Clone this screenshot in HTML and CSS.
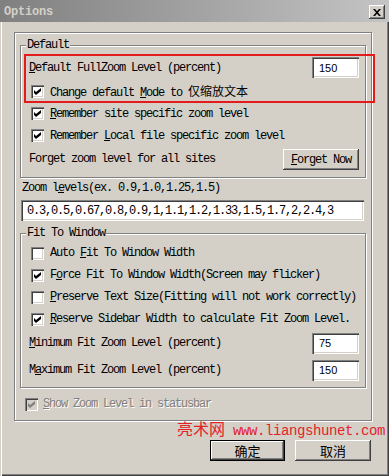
FILE: index.html
```html
<!DOCTYPE html>
<html lang="en">

<head>
    <meta charset="UTF-8">
    <meta name="viewport" content="width=device-width, initial-scale=1.0">
    <title>Options</title>
    <link rel="stylesheet" href="styles.css">
</head>

<body>
    <div class="window">
        <div class="titlebar">
            <span class="title">Options</span>
            <span class="close">
                <svg width="8" height="7" viewBox="0 0 8 7">
                    <path d="M0 0h2l2 2.3 2-2.3h2l-3 3.5 3 3.5h-2l-2-2.3-2 2.3h-2l3-3.5z" fill="#000" />
                </svg>
            </span>
        </div>
        <div class="client">
            <div class="panel">
                <fieldset class="group group-default">
                    <legend>Default</legend>
                    <div class="row row-level">
                        <span><u>D</u>efault FullZoom Level (percent)</span>
                        <span class="edit num">150</span>
                    </div>
                    <div class="row row-mode">
                        <span class="check on"><svg width="7" height="7" viewBox="0 0 7 7"><path d="M0 2l2 2 5-4v3l-5 4-2-2z" /></svg></span>
                        <span>Change default <u>M</u>ode to <span class="cjk">仅缩放文本</span></span>
                    </div>
                    <div class="row row-site">
                        <span class="check on"><svg width="7" height="7" viewBox="0 0 7 7"><path d="M0 2l2 2 5-4v3l-5 4-2-2z" /></svg></span>
                        <span><u>R</u>emember site specific zoom level</span>
                    </div>
                    <div class="row row-local">
                        <span class="check on"><svg width="7" height="7" viewBox="0 0 7 7"><path d="M0 2l2 2 5-4v3l-5 4-2-2z" /></svg></span>
                        <span>Remember <u>L</u>ocal file specific zoom level</span>
                    </div>
                    <div class="row row-forget">
                        <span>Forget zoom level for all sites</span>
                        <span class="btn btn-forget"><span><u>F</u>orget Now</span></span>
                    </div>
                </fieldset>

                <div class="caption">Zoom l<u>e</u>vels(ex. 0.9,1.0,1.25,1.5)</div>
                <div class="edit wide">0.3,0.5,0.67,0.8,0.9,1,1.1,1.2,1.33,1.5,1.7,2,2.4,3</div>

                <fieldset class="group group-fit">
                    <legend>Fit To Window</legend>
                    <div class="row row-fit">
                        <span class="check"></span>
                        <span>Auto <u>F</u>it To Window Width</span>
                    </div>
                    <div class="row row-fit">
                        <span class="check on"><svg width="7" height="7" viewBox="0 0 7 7"><path d="M0 2l2 2 5-4v3l-5 4-2-2z" /></svg></span>
                        <span>F<u>o</u>rce Fit To Window Width(Screen may flicker)</span>
                    </div>
                    <div class="row row-fit">
                        <span class="check"></span>
                        <span><u>P</u>reserve Text Size(Fitting will not work correctly)</span>
                    </div>
                    <div class="row row-fit">
                        <span class="check on"><svg width="7" height="7" viewBox="0 0 7 7"><path d="M0 2l2 2 5-4v3l-5 4-2-2z" /></svg></span>
                        <span><u>R</u>eserve Sidebar Width to calculate Fit Zoom Level.</span>
                    </div>
                    <div class="row row-min">
                        <span><u>M</u>inimum Fit Zoom Level (percent)</span>
                        <span class="edit num">75</span>
                    </div>
                    <div class="row row-max">
                        <span>M<u>a</u>ximum Fit Zoom Level (percent)</span>
                        <span class="edit num">150</span>
                    </div>
                </fieldset>

                <div class="row row-status disabled">
                    <span class="check on"><svg width="7" height="7" viewBox="0 0 7 7"><path d="M0 2l2 2 5-4v3l-5 4-2-2z" /></svg></span>
                    <span><u>S</u>how Zoom Level in statusbar</span>
                </div>
            </div>

            <div class="buttons">
                <span class="btn btn-ok"><span class="cjk">确定</span></span>
                <span class="btn btn-cancel"><span class="cjk">取消</span></span>
            </div>
        </div>

        <div class="mark"><span class="mark-cjk">亮术网</span><span class="mark-url"> www.liangshunet.com</span></div>
        <div class="highlight"></div>
    </div>
</body>

</html>
```

FILE: styles.css
```css
body {
    margin: 0;
    padding: 0;
    background-color: #d4d0c8;
}

.window {
    width: 389px;
    height: 476px;
    position: relative;
    overflow: hidden;
    box-sizing: border-box;
    background-color: #d4d0c8;
    box-shadow: inset 1px 0 #d4d0c8, inset 2px 0 #fff, inset -1px -1px #404040, inset -2px -2px #808080;
    font-family: "Liberation Mono", "Noto Sans CJK SC", monospace;
    font-size: 12px;
    letter-spacing: -1.2px;
    color: #000;
}

.titlebar {
    height: 22px;
    box-sizing: border-box;
    padding: 2px 4px 0 4px;
    display: flex;
    align-items: center;
    justify-content: space-between;
    background: linear-gradient(to right, #808080, #c4c4c4);
}

.title {
    font-weight: bold;
    color: #d4d0c8;
    letter-spacing: -0.2px;
}

.close {
    width: 16px;
    height: 14px;
    display: flex;
    align-items: center;
    justify-content: center;
    background-color: #d4d0c8;
    box-shadow: inset -1px -1px #404040, inset 1px 1px #fff, inset -2px -2px #808080;
}

.client {
    padding: 10px 0 0 14px;
}

.panel {
    width: 358px;
    box-sizing: border-box;
    border: 1px solid #808080;
    box-shadow: inset 1px 1px #fff, 1px 1px #fff;
    padding: 6px 5px 9px 5px;
}

.group {
    margin: 0;
    padding: 5px 6px 6px 8px;
    border: 1px solid #808080;
    box-shadow: inset 1px 1px #fff, 1px 1px #fff;
    min-inline-size: 0;
}

.group legend {
    padding: 0 1px;
    margin-left: -3px;
    line-height: 12px;
    background-color: #d4d0c8;
}

.group-fit {
    margin-top: 6px;
    padding-top: 3px;
}

.row {
    display: flex;
    align-items: center;
    white-space: nowrap;
}

.row-level {
    height: 23px;
}

.row-mode {
    height: 24px;
}

.row-site {
    height: 21px;
}

.row-local {
    height: 23px;
}

.row-forget {
    height: 24px;
}

.row-fit {
    height: 22px;
}

.row-min {
    height: 22px;
    margin-top: 2px;
}

.row-max {
    height: 22px;
    margin-top: 5px;
}

.row-status {
    height: 14px;
    margin-top: 9px;
}

.check {
    width: 13px;
    height: 13px;
    flex-shrink: 0;
    box-sizing: border-box;
    margin: 0 6px 0 2px;
    display: flex;
    align-items: center;
    justify-content: center;
    background-color: #fff;
    box-shadow: inset 1px 1px #808080, inset 2px 2px #404040, inset -1px -1px #fff, inset -2px -2px #d4d0c8;
}

.check svg {
    fill: #000;
}

.row-status .check {
    margin: 0 5px 0 5px;
}

.disabled {
    color: #808080;
    text-shadow: 1px 1px #fff;
}

.disabled .check {
    background-color: #d4d0c8;
}

.disabled .check svg {
    fill: #808080;
}

.edit {
    height: 21px;
    box-sizing: border-box;
    display: flex;
    align-items: center;
    background-color: #fff;
    box-shadow: inset 1px 1px #808080, inset 2px 2px #404040, inset -1px -1px #fff, inset -2px -2px #d4d0c8;
}

.edit.num {
    width: 47px;
    margin-left: auto;
    padding-left: 7px;
    font-family: "Liberation Sans", sans-serif;
    font-size: 11px;
    letter-spacing: 0;
}

.caption {
    margin-top: 4px;
    padding-left: 2px;
    line-height: 13px;
}

.edit.wide {
    width: 343px;
    margin: 5px 0 0 1px;
    padding-left: 6px;
    letter-spacing: -1.2px;
}

.btn {
    height: 21px;
    box-sizing: border-box;
    display: flex;
    align-items: center;
    justify-content: center;
    background-color: #d4d0c8;
    box-shadow: inset -1px -1px #404040, inset 1px 1px #fff, inset -2px -2px #808080;
}

.btn-forget {
    width: 76px;
    margin-left: auto;
    margin-top: 1px;
}

.buttons {
    display: flex;
    justify-content: flex-end;
    gap: 10px;
    padding-right: 18px;
    margin-top: 19px;
}

.btn-ok {
    width: 75px;
    border: 1px solid #000;
}

.btn-cancel {
    width: 76px;
}

.btn .cjk {
    font-size: 13px;
}

.cjk {
    letter-spacing: 0;
}

.mark {
    position: absolute;
    left: 177px;
    top: 422px;
    color: #e42228;
    line-height: 18px;
    letter-spacing: 0;
    white-space: nowrap;
}

.mark-cjk {
    font-size: 16px;
}

.mark-url {
    font-family: "Liberation Mono", monospace;
    font-size: 14px;
    letter-spacing: -0.4px;
}

.highlight {
    position: absolute;
    left: 24px;
    top: 54px;
    width: 351px;
    height: 49px;
    box-sizing: border-box;
    border: 2px solid #e41b1b;
}
```
